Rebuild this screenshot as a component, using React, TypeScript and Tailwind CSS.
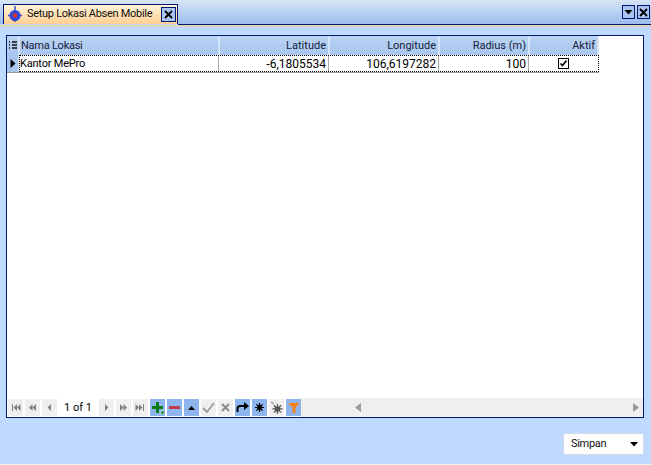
import React from "react";

const F = "font-['Roboto','Liberation_Sans',sans-serif]";

const Arrow = ({ d }: { d: string }) => (
  <svg width="15" height="17" viewBox="0 0 15 17"><path d={d} fill="#808080" /></svg>
);

const NavBtn = ({ d, blue, children }: { d?: string; blue?: boolean; children?: React.ReactNode }) => (
  <div className={`w-[15px] h-[17px] flex items-center justify-center shrink-0 ${blue ? "bg-[#8fb5ee]" : "bg-[#efefef]"}`}>
    {children ?? <Arrow d={d!} />}
  </div>
);

const Header = ({ w, label, right }: { w: string; label: string; right?: boolean }) => (
  <div className={`${w} h-full flex items-center pt-[1px] border-r-2 border-r-[#d5e3f7] ${right ? "justify-end pr-[2px]" : "pl-[1px] tracking-[-0.25px]"} text-[#14213d]`}>
    {label}
  </div>
);

const Cell = ({ w, children, right }: { w: string; children: React.ReactNode; right?: boolean }) => (
  <div className={`${w} h-full flex items-center pt-[1px] border-r border-r-[#a9a9a9] ${right ? "justify-end pr-[2px] text-[12px]" : "pl-0 tracking-[-0.2px]"} text-black`}>
    {children}
  </div>
);

export default function App() {
  return (
    <div className={`w-[651px] h-[465px] flex flex-col bg-[#bfdaff] text-[11px] overflow-hidden ${F}`}>
      <div className="h-[24px] flex items-end bg-gradient-to-b from-[#d8e4f6] to-[#9abdee] pl-[3px]">
        <div className="w-[175px] h-[20px] shrink-0 flex items-center border border-b-0 border-[#00196e] bg-gradient-to-b from-[#fff3d8] to-[#ffcf92] pl-[2px]">
          <svg width="18" height="18" viewBox="0 0 18 18" className="shrink-0">
            <path d="M9 0v16M2 9.500h14" stroke="#3a4fd0" strokeWidth="1.500" />
            <circle cx="9" cy="9.500" r="5.500" fill="#3348d8" />
            <circle cx="9" cy="9.500" r="2.300" fill="#d8322c" />
          </svg>
          <span className="ml-[3px] text-[#111] whitespace-nowrap tracking-[-0.3px]">Setup Lokasi Absen Mobile</span>
          <div className="ml-auto mr-[1px] w-[15px] h-[15px] shrink-0 border border-[#00196e] bg-[#a9c4f0] flex items-center justify-center">
            <svg width="11" height="11" viewBox="0 0 11 11"><path d="M2 2l7 7M9 2l-7 7" stroke="#000" strokeWidth="1.800" /></svg>
          </div>
        </div>
        <div className="flex-1 h-full flex items-start justify-end gap-[2px] pt-[5px] pr-[1px]">
          <div className="w-[13px] h-[14px] border border-[#00196e] bg-[#a9c4f0] flex items-center justify-center">
            <svg width="9" height="6" viewBox="0 0 9 6"><path d="M0.500 1h8L4.500 5.500z" fill="#000" /></svg>
          </div>
          <div className="w-[13px] h-[14px] border border-[#00196e] bg-[#a9c4f0] flex items-center justify-center">
            <svg width="11" height="11" viewBox="0 0 11 11"><path d="M2 2l7 7M9 2l-7 7" stroke="#000" strokeWidth="1.800" /></svg>
          </div>
        </div>
      </div>
      <div className="h-[1px] ml-[178px] bg-[#00196e]" />
      <div className="h-[2px] bg-gradient-to-b from-[#ffc98a] to-[#bfdaff]" />

      <div className="flex-1 flex flex-col px-[6px] pr-[7px] pt-[8px]">
        <div className="h-[383px] flex flex-col border border-[#00196e] bg-white">
          <div className="flex-1">
            <div className="w-[592px]">
              <div className="h-[19px] flex bg-gradient-to-b from-[#bad3f3] to-[#a9c6ef]">
                <div className="w-[13px] h-full flex items-center justify-center border-r-2 border-r-[#d5e3f7]">
                  <svg width="8" height="9" viewBox="0 0 8 9"><path d="M0 1h1M0 4h1M0 7h1M3 1h5M3 4h5M3 7h5" stroke="#111" strokeWidth="1.300" /></svg>
                </div>
                <Header w="w-[200px]" label="Nama Lokasi" />
                <Header w="w-[110px]" label="Latitude" right />
                <Header w="w-[110px]" label="Longitude" right />
                <Header w="w-[90px]" label="Radius (m)" right />
                <Header w="w-[69px]" label="Aktif" right />
              </div>
              <div className="h-[18px] flex border-b border-b-[#9a9a9a]">
                <div className="w-[12px] h-full flex items-center justify-center bg-[#a9c6ef] border-r border-[#d5e3f7]">
                  <svg width="6" height="9" viewBox="0 0 6 9"><path d="M0.500 0v9L5.500 4.500z" fill="#000" /></svg>
                </div>
                <div className="flex-1 h-full flex border border-dotted border-black">
                  <Cell w="w-[199px]">Kantor MePro</Cell>
                  <Cell w="w-[110px]" right>-6,1805534</Cell>
                  <Cell w="w-[110px]" right>106,6197282</Cell>
                  <Cell w="w-[90px]" right>100</Cell>
                  <div className="flex-1 flex items-center justify-center">
                    <svg width="11" height="11" viewBox="0 0 11 11">
                      <rect x="0.500" y="0.500" width="10" height="10" fill="#fff" stroke="#000" />
                      <path d="M2.500 5.500l2 2 4-5" fill="none" stroke="#000" strokeWidth="1.700" />
                    </svg>
                  </div>
                </div>
              </div>
            </div>
          </div>
          <div className="h-[19px] flex items-end">
            <div className="pl-[1px] pb-[1px] flex gap-[2px] items-center">
              <NavBtn d="M4 5h1v7H4zM9 5v7L5.500 8.500zM12.500 5v7L9 8.500z" />
              <NavBtn d="M7.500 5v7L4 8.500zM11 5v7L7.500 8.500z" />
              <NavBtn d="M9 5v7L5.500 8.500z" />
              <div className="w-[38px] text-center text-black leading-[17px]">1 of 1</div>
              <NavBtn d="M6 5v7l3.500-3.500z" />
              <NavBtn d="M4 5v7l3.500-3.500zM7.500 5v7l3.500-3.500z" />
              <NavBtn d="M2.500 5v7L6 8.500zM6 5v7l3.500-3.500zM10 5h1v7h-1z" />
              <NavBtn blue>
                <svg width="13" height="13" viewBox="0 0 13 13">
                  <path d="M5 1h3v4h4v3H8v4H5V8H1V5h4z" fill="#0a7d14" />
                  <path d="M10 10h3v3h-3z" fill="#0a7d14" stroke="#fff" strokeWidth="0.500" />
                </svg>
              </NavBtn>
              <NavBtn blue>
                <svg width="11" height="3" viewBox="0 0 11 3"><path d="M0 0h11v3H0z" fill="#c23a4a" /></svg>
              </NavBtn>
              <NavBtn blue>
                <svg width="7" height="4" viewBox="0 0 7 4"><path d="M3.500 0L7 4H0z" fill="#000" /></svg>
              </NavBtn>
              <NavBtn>
                <svg width="13" height="11" viewBox="0 0 13 11"><path d="M1 6l4 4 7-9" fill="none" stroke="#9c9c9c" strokeWidth="1.800" /></svg>
              </NavBtn>
              <NavBtn>
                <svg width="9" height="9" viewBox="0 0 9 9"><path d="M1 1l7 7M8 1L1 8" stroke="#8a8a8a" strokeWidth="2" /></svg>
              </NavBtn>
              <NavBtn blue>
                <svg width="13" height="11" viewBox="0 0 13 11"><path d="M1.500 10V6.500Q1.500 4 4 4h5" fill="none" stroke="#000" strokeWidth="2" /><path d="M8 0l5 4-5 4z" fill="#000" /></svg>
              </NavBtn>
              <NavBtn blue>
                <svg width="9" height="9" viewBox="0 0 11 11"><path d="M5.500 0v11M0 5.500h11M1.700 1.700l7.600 7.600M9.300 1.700l-7.600 7.600" stroke="#000" strokeWidth="1.500" /><circle cx="5.500" cy="5.500" r="3" fill="#000" /></svg>
              </NavBtn>
              <NavBtn>
                <svg width="12" height="12" viewBox="0 0 13 13"><path d="M7 2v11M1.500 7.500h11M3 3.500l8 8M11 3.500l-8 8" stroke="#555" strokeWidth="1.300" /><circle cx="7" cy="7.500" r="3" fill="#555" /><path d="M0 0l3 2" stroke="#555" /></svg>
              </NavBtn>
              <NavBtn blue>
                <svg width="12" height="12" viewBox="0 0 12 12"><path d="M0 1h12L7.500 5.500V11h-3V5.500z" fill="#f5821f" /></svg>
              </NavBtn>
            </div>
            <div className="flex-1 h-[19px] bg-[#efefef] flex items-center justify-between pl-[54px] pr-[4px]">
              <svg width="6" height="9" viewBox="0 0 6 9"><path d="M6 0v9L0 4.500z" fill="#999" /></svg>
              <svg width="6" height="9" viewBox="0 0 6 9"><path d="M0 0v9l6-4.500z" fill="#999" /></svg>
            </div>
          </div>
        </div>
        <div className="flex justify-end mt-[15px]">
          <div className="w-[81px] h-[22px] rounded-[3px] bg-white border border-[#d4dbe6] flex items-center justify-between pl-[7px] pr-[5px] text-[#111]">
            <span className="tracking-[-0.3px]">Simpan</span>
            <svg width="8" height="5" viewBox="0 0 8 5"><path d="M0 0h8L4 4.500z" fill="#000" /></svg>
          </div>
        </div>
      </div>
      <div className="h-[1px] bg-[#f4f4f4]" />
    </div>
  );
}
